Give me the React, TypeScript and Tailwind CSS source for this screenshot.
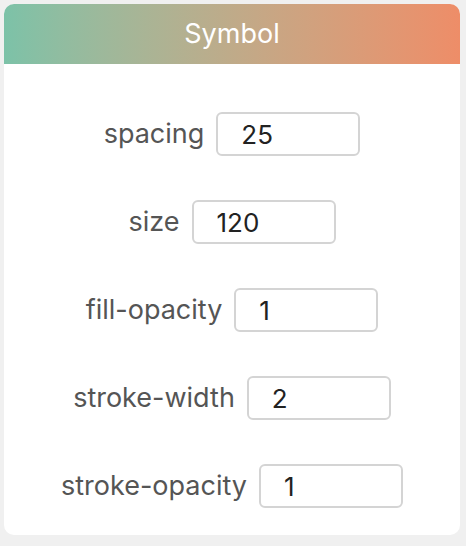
const fields = [
  { label: "spacing", value: "25" },
  { label: "size", value: "120" },
  { label: "fill-opacity", value: "1" },
  { label: "stroke-width", value: "2" },
  { label: "stroke-opacity", value: "1" },
];

export default function App() {
  return (
    <div
      className="min-h-[546px] w-[466px] bg-[#f0f0f0] p-1"
      style={{ fontFamily: "Inter, \"Liberation Sans\", sans-serif" }}
    >
      <div className="w-[456px] h-[531px] rounded-[10px] bg-white overflow-hidden">
        <div className="h-[60px] flex items-center justify-center bg-gradient-to-r from-[#7cc2a8] to-[#ee8d68] text-white text-[27px]">
          Symbol
        </div>
        <div className="flex flex-col items-center pt-[48px] gap-[44px]">
          {fields.map((f) => (
            <div key={f.label} className="flex items-center gap-3">
              <span className="text-[27px] text-[#555555]">{f.label}</span>
              <input
                defaultValue={f.value}
                className="w-[144px] h-[44px] rounded-[6px] border-2 border-[#d4d4d4] pl-[23px] text-[26px] text-[#222222] outline-none"
                style={{ fontFamily: "inherit" }}
              />
            </div>
          ))}
        </div>
      </div>
    </div>
  );
}
